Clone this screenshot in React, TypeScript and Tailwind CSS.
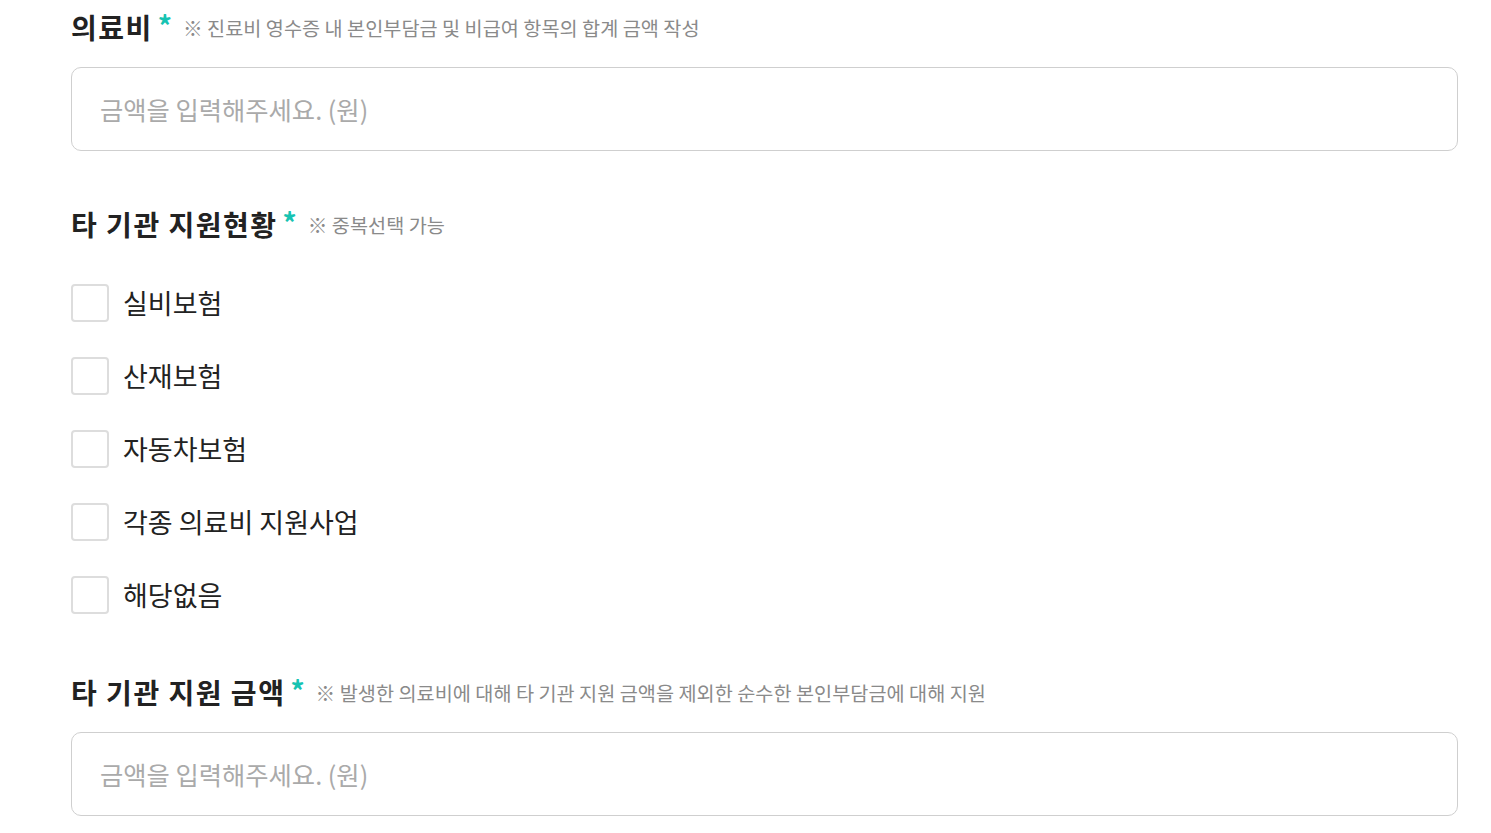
import { useState } from "react";

const font = { fontFamily: '"Noto Sans CJK KR", "Noto Sans", sans-serif' };

const options = ["실비보험", "산재보험", "자동차보험", "각종 의료비 지원사업", "해당없음"];

function Label({ title, note }: { title: string; note: string }) {
  return (
    <div className="flex items-center h-[34px]">
      <span className="text-[28px] leading-[34px] font-semibold tracking-[1.5px] text-[#222]">{title}</span>
      <span className="self-start text-[28px] leading-[28px] font-bold text-[#17c3b2] ml-[5px] mt-[1px]">*</span>
      <span className="text-[19.7px] leading-[24px] text-[#8a8a8a] ml-[11px] mt-[2px]">{note}</span>
    </div>
  );
}

function AmountInput() {
  return (
    <input
      type="text"
      placeholder="금액을 입력해주세요. (원)"
      className="block w-full h-[84px] mt-[23px] px-[28px] rounded-[10px] border border-[#cfcfcf] bg-white text-[25.3px] text-[#222] placeholder:text-[#aaaaaa] outline-none"
      style={font}
    />
  );
}

export default function App() {
  const [checked, setChecked] = useState<string[]>([]);

  function toggle(opt: string) {
    setChecked((prev) => (prev.includes(opt) ? prev.filter((o) => o !== opt) : [...prev, opt]));
  }

  return (
    <div className="min-h-screen bg-white pl-[71px] pr-[33px] pt-[10px]" style={font}>
      {/* 의료비 */}
      <Label title="의료비" note="※ 진료비 영수증 내 본인부담금 및 비급여 항목의 합계 금액 작성" />
      <AmountInput />

      {/* 타 기관 지원현황 */}
      <div className="mt-[56px]">
        <Label title="타 기관 지원현황" note="※ 중복선택 가능" />
      </div>
      <div className="mt-[43px] flex flex-col gap-[35px]">
        {options.map((opt) => (
          <label key={opt} className="flex items-center cursor-pointer">
            <button
              type="button"
              onClick={() => toggle(opt)}
              className={`w-[38px] h-[38px] rounded-[4px] border-2 ${
                checked.includes(opt) ? "border-[#17c3b2] bg-[#17c3b2]" : "border-[#dddddd] bg-white"
              }`}
            />
            <span className="ml-[14px] text-[27px] leading-[38px] text-[#222]">{opt}</span>
          </label>
        ))}
      </div>

      {/* 타 기관 지원 금액 */}
      <div className="mt-[61px]">
        <Label title="타 기관 지원 금액" note="※ 발생한 의료비에 대해 타 기관 지원 금액을 제외한 순수한 본인부담금에 대해 지원" />
      </div>
      <AmountInput />
    </div>
  );
}
